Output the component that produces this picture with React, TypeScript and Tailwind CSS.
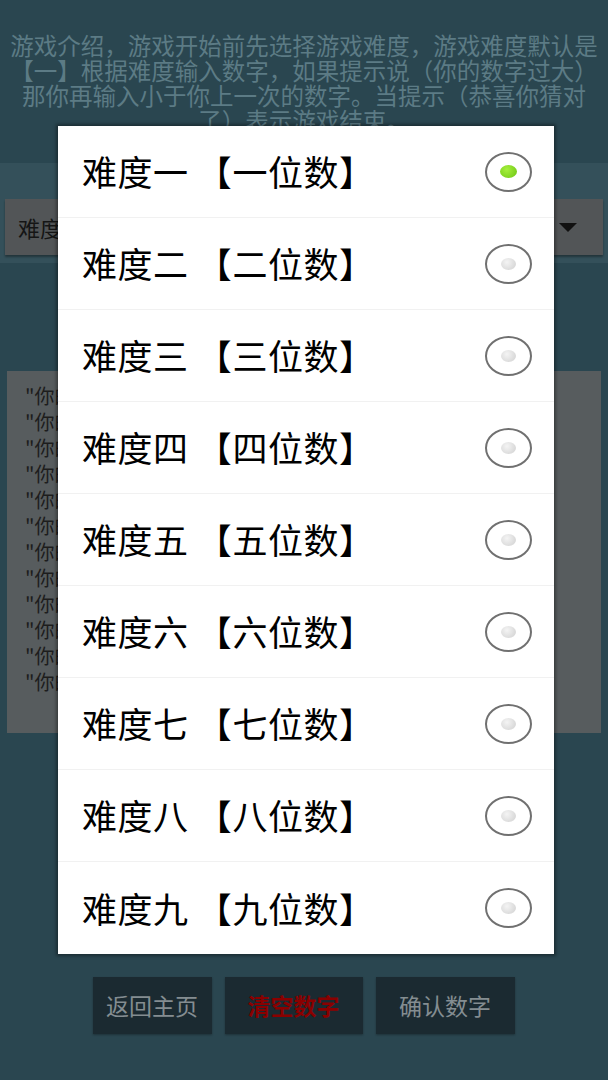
const font = { fontFamily: '"Noto Sans CJK SC", "Noto Sans", sans-serif' };

const introLines = [
  "游戏介绍，游戏开始前先选择游戏难度，游戏难度默认是",
  "【一】根据难度输入数字，如果提示说（你的数字过大）",
  "那你再输入小于你上一次的数字。当提示（恭喜你猜对",
  "了）表示游戏结束。",
];

const levels = ["一", "二", "三", "四", "五", "六", "七", "八", "九"];

const history = [
  "\"你的数字过大\"",
  "\"你的数字过小\"",
  "\"你的数字过大\"",
  "\"你的数字过小\"",
  "\"你的数字过大\"",
  "\"你的数字过小\"",
  "\"你的数字过大\"",
  "\"你的数字过小\"",
  "\"你的数字过大\"",
  "\"你的数字过小\"",
  "\"你的数字过大\"",
  "\"你的数字过小\"",
];

const Radio = ({ checked }: { checked: boolean }) => (
  <div className="w-[47px] h-[40px] rounded-[50%] border-2 border-[#707070] bg-white flex items-center justify-center">
    {checked ? (
      <div className="w-[17px] h-[13px] rounded-[50%] bg-[radial-gradient(circle_at_40%_35%,#a6f03c,#6cc413)]" />
    ) : (
      <div className="w-[15px] h-[12px] rounded-[50%] bg-[radial-gradient(circle_at_40%_35%,#f4f4f4,#cfcfcf)]" />
    )}
  </div>
);

export default function App() {
  const selected = 0;

  return (
    <div className="relative w-[608px] h-[1080px] overflow-hidden bg-[#2a4650]" style={font}>
      {/* intro */}
      <div className="h-[163px] pt-[33px] text-center text-[23.5px] leading-[25px] text-[#5c7b85]">
        {introLines.map((l, i) => (
          <div key={i} className="whitespace-nowrap">{l}</div>
        ))}
      </div>

      {/* difficulty spinner band */}
      <div className="h-[100px] bg-[#34505a] pt-[36px] px-[5px]">
        <div className="h-[56px] bg-[#525557] shadow-[0_2px_2px_rgba(0,0,0,0.35)] flex items-center justify-between pl-[13px] pr-[26px]">
          <span className="text-[22px] text-[#151515]">难度一【一位数】</span>
          <span className="w-0 h-0 border-l-[9px] border-r-[9px] border-t-[9px] border-l-transparent border-r-transparent border-t-[#111]" />
        </div>
      </div>

      {/* history */}
      <div className="pt-[108px] px-[7px]">
        <div className="h-[362px] bg-[#575c5e] pt-[12px] pl-[18px]">
          {history.map((h, i) => (
            <div key={i} className="text-[20px] leading-[26px] text-[#1d1d1d]">{h}</div>
          ))}
        </div>
      </div>

      {/* buttons */}
      <div className="mt-[244px] flex justify-center gap-[13px] pr-[1px]">
        <button className="w-[119px] h-[57px] bg-[#1b2a31] text-[23px] text-[#848d91] shadow-[0_1px_2px_rgba(0,0,0,0.3)]">返回主页</button>
        <button className="w-[138px] h-[57px] bg-[#1b2a31] text-[23px] font-bold text-[#8a0000] shadow-[0_1px_2px_rgba(0,0,0,0.3)]">清空数字</button>
        <button className="w-[139px] h-[57px] bg-[#1b2a31] text-[23px] text-[#848d91] shadow-[0_1px_2px_rgba(0,0,0,0.3)]">确认数字</button>
      </div>

      {/* dialog */}
      <div className="absolute inset-0 flex items-start justify-center pt-[126px] pl-[4px]">
        <div className="w-[496px] bg-white shadow-[0_0_3px_2px_rgba(0,0,0,0.35)]">
          {levels.map((n, i) => (
            <div
              key={n}
              className={`h-[92px] flex items-center justify-between pl-[24px] pr-[22px] ${i < levels.length - 1 ? "border-b border-[#f1f1f1]" : ""}`}
            >
              <span className="text-[35px] tracking-[0.5px] text-black whitespace-nowrap">难度{n} 【{n}位数】</span>
              <Radio checked={i === selected} />
            </div>
          ))}
        </div>
      </div>
    </div>
  );
}
